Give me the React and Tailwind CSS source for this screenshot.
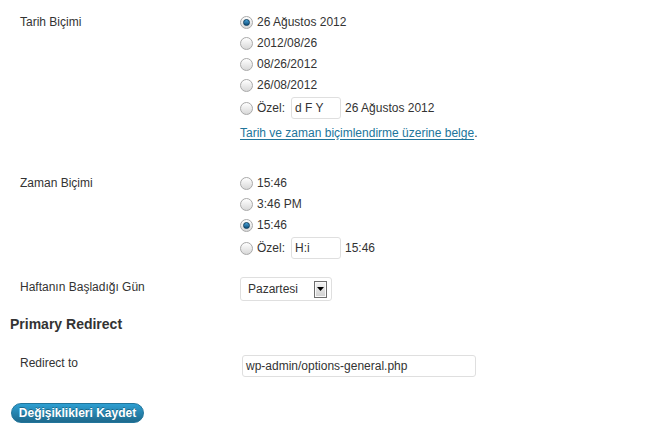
import React from "react";

function Radio({ checked }) {
  return (
    <span className="relative inline-flex h-[13px] w-[13px] shrink-0 items-center justify-center rounded-full border border-[#a9a9a9] bg-gradient-to-b from-[#ffffff] to-[#d8d8d8]">
      {checked && (
        <span className="block h-[7px] w-[7px] rounded-full bg-gradient-to-b from-[#4aa3d8] to-[#0b4f7c] border border-[#0d3e5e]" />
      )}
    </span>
  );
}

function RadioLine({ checked, children, tall }) {
  return (
    <div className={`flex items-center gap-[4px] ${tall ? "h-[24px]" : "h-[21px]"}`}>
      <Radio checked={checked} />
      {children}
    </div>
  );
}

function SmallInput({ value }) {
  return (
    <div className="ml-[2px] flex h-[22px] w-[50px] items-center rounded-[3px] border border-[#dfdfdf] bg-white px-[3px]">
      {value}
    </div>
  );
}

export default function App() {
  return (
    <div
      className="relative h-[444px] w-[651px] bg-white text-[12px] text-[#333]"
      style={{ fontFamily: '"Liberation Sans", Arial, sans-serif' }}
    >
      <div className="flex flex-col">
        {/* Tarih Biçimi */}
        <div className="flex pt-[12px]">
          <div className="w-[240px] pl-[20px] leading-[21px]">Tarih Biçimi</div>
          <div className="flex flex-col leading-[21px]">
            <RadioLine checked>26 Ağustos 2012</RadioLine>
            <RadioLine>2012/08/26</RadioLine>
            <RadioLine>08/26/2012</RadioLine>
            <RadioLine>26/08/2012</RadioLine>
            <RadioLine tall>
              <span>Özel:</span>
              <SmallInput value="d F Y" />
              <span>26 Ağustos 2012</span>
            </RadioLine>
            <div className="mt-[3px] h-[21px]">
              <a className="text-[#21759b] underline underline-offset-[2px]">
                Tarih ve zaman biçimlendirme üzerine belge
              </a>
              .
            </div>
          </div>
        </div>

        {/* Zaman Biçimi */}
        <div className="mt-[29px] flex">
          <div className="w-[240px] pl-[20px] leading-[21px]">Zaman Biçimi</div>
          <div className="flex flex-col leading-[21px]">
            <RadioLine>15:46</RadioLine>
            <RadioLine>3:46 PM</RadioLine>
            <RadioLine checked>15:46</RadioLine>
            <RadioLine tall>
              <span>Özel:</span>
              <SmallInput value="H:i" />
              <span>15:46</span>
            </RadioLine>
          </div>
        </div>

        {/* Haftanın Başladığı Gün */}
        <div className="mt-[17px] flex">
          <div className="w-[240px] pl-[20px] leading-[21px]">Haftanın Başladığı Gün</div>
          <div className="flex h-[24px] w-[92px] items-center justify-between rounded-[3px] border border-[#dfdfdf] bg-white pl-[7px] pr-[4px]">
            <span>Pazartesi</span>
            <span className="flex h-[17px] w-[13px] items-center justify-center border border-[#6e6e6e] bg-gradient-to-b from-[#f4f4f4] to-[#cfcfcf] shadow-[inset_0_0_0_1px_#fafafa]">
              <svg width="7" height="4" viewBox="0 0 7 4">
                <path d="M0 0h7L3.5 4z" fill="#000" />
              </svg>
            </span>
          </div>
        </div>

        {/* Primary Redirect */}
        <h2 className="mt-[13px] pl-[10px] text-[14px] font-bold leading-[20px] text-[#333]">
          Primary Redirect
        </h2>

        <div className="mt-[19px] flex">
          <div className="w-[242px] pl-[20px] leading-[21px]">Redirect to</div>
          <div className="mt-[2px] flex h-[22px] w-[234px] items-center rounded-[3px] border border-[#dfdfdf] bg-white px-[3px]">
            wp-admin/options-general.php
          </div>
        </div>

        <div className="mt-[26px] pl-[11px]">
          <button
            className="flex h-[20px] w-[133px] items-center justify-center rounded-full border border-[#21759b] bg-gradient-to-b from-[#2e9fd2] to-[#1e6a8d] text-[12px] font-bold text-white"
            style={{ textShadow: "0 -1px 0 rgba(0,0,0,0.3)", fontFamily: '"Liberation Sans", Arial, sans-serif' }}
          >
            Değişiklikleri Kaydet
          </button>
        </div>
      </div>
    </div>
  );
}
